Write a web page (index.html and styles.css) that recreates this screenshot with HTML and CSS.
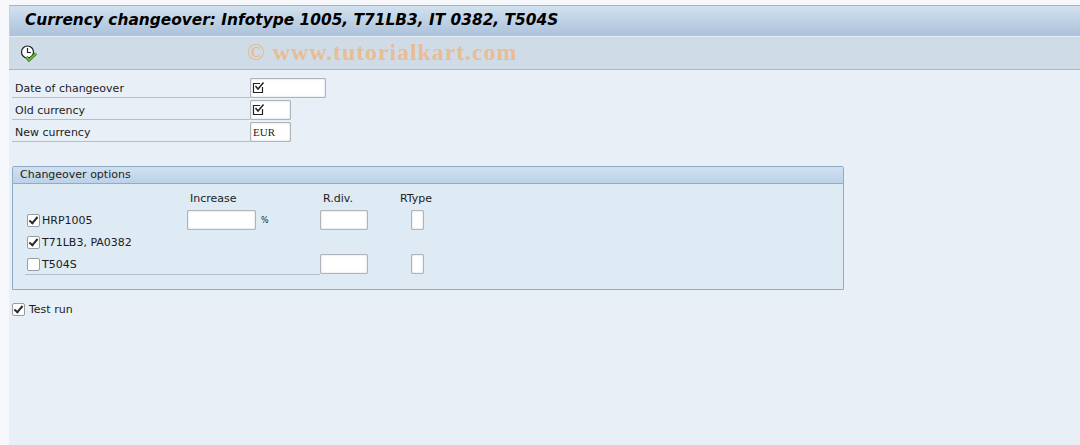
FILE: index.html
```html
<!doctype html>
<html lang="en">
<head>
    <meta charset="UTF-8">
    <title>Currency changeover</title>
    <link rel="stylesheet" href="styles.css">
</head>
<body>
    <div class="window">
        <div class="title-bar">Currency changeover: Infotype 1005, T71LB3, IT 0382, T504S</div>
        <div class="toolbar">
            <svg class="exec-icon" width="18" height="18" viewBox="0 0 18 18">
                <circle cx="7.500" cy="7" r="6" fill="#fff" stroke="#222" stroke-width="1.200"/>
                <path d="M7.500 3V7.500H11" fill="none" stroke="#222" stroke-width="1.200"/>
                <path d="M6.500 12L9 15L16 8.500" fill="none" stroke="#2f6e18" stroke-width="3"/>
                <path d="M6.500 12L9 15L16 8.500" fill="none" stroke="#6cc23a" stroke-width="1.600"/>
            </svg>
            <div class="watermark">© www.tutorialkart.com</div>
        </div>

        <div class="content">
            <div class="fields">
                <div class="field-row">
                    <div class="field-label">Date of changeover</div>
                    <div class="input w-date">
                        <svg class="req-icon" width="13" height="13" viewBox="0 0 13 13"><path d="M10.500 6V11.500H1.500V2.500H8" fill="none" stroke="#222" stroke-width="1.200"/><path d="M3.500 5L6 8L11.500 1.500" fill="none" stroke="#222" stroke-width="1.500"/></svg>
                    </div>
                </div>
                <div class="field-row">
                    <div class="field-label">Old currency</div>
                    <div class="input w-cur">
                        <svg class="req-icon" width="13" height="13" viewBox="0 0 13 13"><path d="M10.500 6V11.500H1.500V2.500H8" fill="none" stroke="#222" stroke-width="1.200"/><path d="M3.500 5L6 8L11.500 1.500" fill="none" stroke="#222" stroke-width="1.500"/></svg>
                    </div>
                </div>
                <div class="field-row">
                    <div class="field-label">New currency</div>
                    <div class="input w-cur mono">EUR</div>
                </div>
            </div>

            <div class="group">
                <div class="group-title">Changeover options</div>
                <div class="group-body">
                    <div class="col-head head-inc">Increase</div>
                    <div class="col-head head-div">R.div.</div>
                    <div class="col-head head-type">RType</div>

                    <div class="check-cell"><span class="check on"></span>HRP1005</div>
                    <div class="inc-cell"><div class="input w-inc"></div><span class="unit">%</span></div>
                    <div class="input w-div"></div>
                    <div class="input w-type"></div>

                    <div class="check-cell"><span class="check on"></span>T71LB3, PA0382</div>
                    <div class="blank"></div>
                    <div class="blank"></div>
                    <div class="blank"></div>

                    <div class="check-cell last-check"><span class="check"></span>T504S</div>
                    <div class="input w-div"></div>
                    <div class="input w-type"></div>
                </div>
            </div>

            <div class="test-run"><span class="check on"></span>Test run</div>
        </div>
    </div>
</body>
</html>
```
FILE: styles.css
```css
html, body {
    margin: 0;
    padding: 0;
    height: 100%;
}

body {
    background: #f6f8fb;
    font-family: "DejaVu Sans", sans-serif;
    font-size: 11px;
    color: #1c1c1c;
    overflow: hidden;
}

.window {
    box-sizing: border-box;
    height: 100%;
    margin-left: 9px;
    padding-top: 5px;
    display: flex;
    flex-direction: column;
}

.title-bar {
    height: 31px;
    box-sizing: border-box;
    border-top: 1px solid #a4b2c2;
    border-left: 1px solid #c4d0dc;
    padding-left: 15px;
    line-height: 28px;
    font-size: 15.4px;
    font-weight: bold;
    font-style: italic;
    color: #000;
    background: linear-gradient(#d2e1ef, #abc2da);
}

.toolbar {
    position: relative;
    height: 34px;
    box-sizing: border-box;
    border-top: 1px solid #e6eef5;
    border-bottom: 1px solid #a9b7c5;
    background: #cfdce8;
    padding: 8px 0 0 11px;
}

.exec-icon {
    display: block;
}

.watermark {
    position: absolute;
    left: 238px;
    top: 2px;
    font-family: "Liberation Serif", serif;
    font-size: 24px;
    font-weight: bold;
    letter-spacing: 0.9px;
    color: #e8bd93;
    white-space: nowrap;
}

.content {
    flex: 1;
    background: #e8eff7;
    padding: 8px 0 0 3px;
}

.fields {
    width: 320px;
}

.field-row {
    display: flex;
    height: 22px;
}

.field-label {
    box-sizing: border-box;
    width: 238px;
    height: 20px;
    padding: 2px 0 0 3px;
    line-height: 17px;
    border-bottom: 1px solid #b4bfca;
}

.input {
    box-sizing: border-box;
    height: 20px;
    background: #fff;
    border: 1px solid #aeb4ba;
    box-shadow: inset 0 0 2px #c4c8cc;
    border-radius: 1px;
}

.w-date { width: 76px; }
.w-cur { width: 41px; }
.w-inc { width: 69px; }
.w-div { width: 48px; }
.w-type { width: 13px; }

.req-icon {
    display: block;
    margin: 2px 0 0 1px;
}

.mono {
    font-family: "Liberation Serif", serif;
    font-size: 11px;
    line-height: 18px;
    padding-left: 2px;
    color: #222;
}

.group {
    box-sizing: border-box;
    width: 832px;
    height: 124px;
    margin-top: 22px;
    border: 1px solid #8eabc8;
    border-radius: 2px 2px 0 0;
    background: #deeaf4;
}

.group-title {
    box-sizing: border-box;
    height: 17px;
    padding-left: 7px;
    line-height: 15px;
    border-bottom: 1px solid #8eabc8;
    background: linear-gradient(#d0e0f0, #bcd2e8);
}

.group-body {
    display: grid;
    grid-template-columns: 162px 133px 91px 13px;
    grid-auto-rows: 22px;
    padding: 4px 0 0 12px;
}

.col-head {
    line-height: 21px;
}

.head-inc { grid-column: 2; padding-left: 3px; }
.head-div { grid-column: 3; padding-left: 3px; }
.head-type { grid-column: 4; margin-left: -11px; white-space: nowrap; }

.check-cell {
    display: flex;
    align-items: center;
    height: 20px;
    padding-left: 2px;
    white-space: nowrap;
}

.last-check {
    grid-column: 1 / span 2;
    border-bottom: 1px solid #b4bfca;
}

.check {
    box-sizing: border-box;
    flex: none;
    display: inline-block;
    position: relative;
    width: 13px;
    height: 13px;
    margin-right: 2px;
    background: #fff;
    border: 1px solid #979da3;
    border-radius: 2px;
}

.check.on::after {
    content: "";
    position: absolute;
    left: 3px;
    top: 0;
    width: 3px;
    height: 7px;
    border: solid #2a2a2a;
    border-width: 0 2px 2px 0;
    transform: rotate(40deg);
}

.inc-cell {
    display: flex;
    align-items: center;
    height: 20px;
}

.unit {
    margin-left: 5px;
    font-size: 8px;
}

.test-run {
    display: flex;
    align-items: center;
    height: 20px;
    margin-top: 9px;
}

.test-run .check {
    margin-right: 4px;
}
```
